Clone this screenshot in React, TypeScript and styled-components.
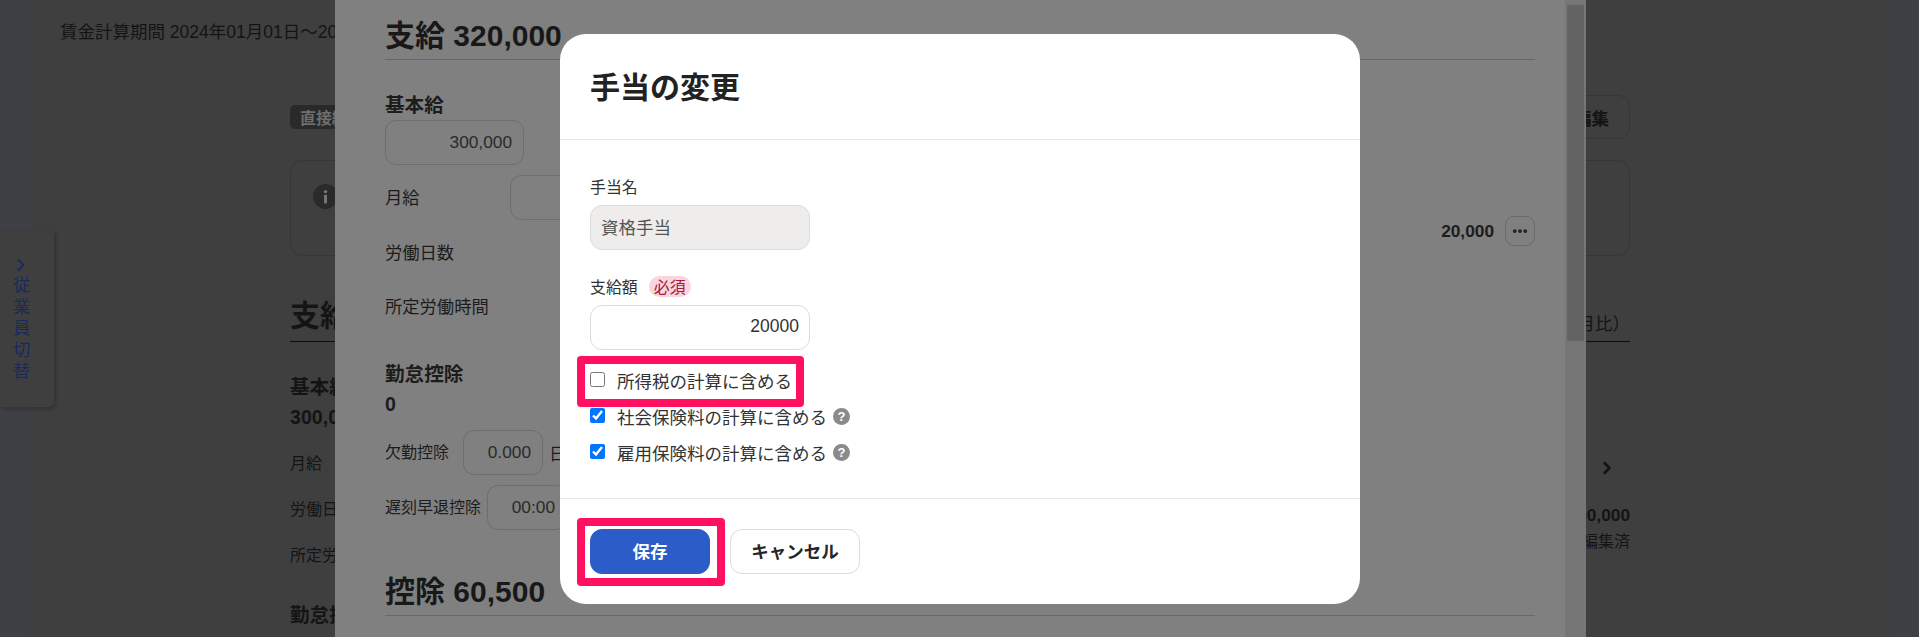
import React from "react";
import styled, { createGlobalStyle } from "styled-components";
import { ChevronRight, MoreHorizontal } from "lucide-react";

const font = `"Liberation Sans", "Noto Sans CJK JP", sans-serif`;

const GlobalStyle = createGlobalStyle`
  html, body {
    margin: 0;
    padding: 0;
    font-family: ${font};
    overflow: hidden;
  }
  * {
    box-sizing: border-box;
  }
`;

/* page behind the two overlays */
const Page = styled.div`
  display: flex;
  width: 100%;
  height: 100vh;
  overflow: hidden;
  background: #3e4045;
  color: #141414;
  font-size: 17.5px;
`;

const Main = styled.main`
  flex: 1;
  min-width: 0;
  margin: 0 30px;
  padding: 20px 0 0 30px;
  background: #3f3f3f;
`;

const Period = styled.div`
  line-height: 24px;
  white-space: nowrap;
`;

const Content = styled.div`
  width: 1340px;
  margin: 51px 0 0 230px;
`;

const TopRow = styled.div`
  display: flex;
  align-items: center;
  justify-content: space-between;
  height: 44px;
`;

const Badge = styled.span`
  display: inline-flex;
  align-items: center;
  height: 24px;
  padding: 0 10px;
  border-radius: 5px;
  background: #2a2a2a;
  color: #6e6e6e;
  font-size: 15.9px;
  font-weight: 700;
`;

const EditButton = styled.div`
  display: flex;
  align-items: center;
  height: 44px;
  padding: 0 20px;
  border: 1px solid #363636;
  border-radius: 11px;
  font-weight: 700;
`;

const InfoCard = styled.div`
  height: 96px;
  margin-top: 21px;
  padding: 23px 22px;
  border: 1px solid #363636;
  border-radius: 12px;
`;

const InfoIcon = () => (
  <svg width="25" height="25" viewBox="0 0 25 25">
    <circle cx="12.5" cy="12.5" r="12.5" fill="#2a2a2a" />
    <circle cx="12.5" cy="7.6" r="1.7" fill="#777" />
    <rect x="11" y="10.8" width="3" height="8.6" rx="0.6" fill="#777" />
  </svg>
);

const PageHeading = styled.div`
  display: flex;
  align-items: flex-end;
  justify-content: space-between;
  height: 50px;
  margin-top: 36px;
  padding-bottom: 6px;
  border-bottom: 1.5px solid #0d0d0d;
`;

const HeadingTitle = styled.h2`
  margin: 0;
  font-size: 30px;
  font-weight: 700;
`;

const Columns = styled.div`
  display: flex;
  justify-content: space-between;
`;

const PageLeft = styled.div`
  display: flex;
  flex-direction: column;
  padding-top: 32px;
`;

const PageText = styled.div<{ $bold?: boolean; $gap: number; $size?: number }>`
  margin-top: ${(p) => p.$gap}px;
  line-height: 26px;
  font-size: ${(p) => p.$size ?? 16}px;
  font-weight: ${(p) => (p.$bold ? 700 : 400)};
`;

const PageRight = styled.div`
  display: flex;
  flex-direction: column;
  align-items: flex-end;
  padding-top: 116px;
`;

const Pager = styled.div`
  display: flex;
  align-items: center;
  gap: 12px;
  height: 20px;
  margin-right: 13px;
  color: #1a2f66;
`;

const PagerChevron = styled.span`
  display: flex;
  color: #141414;
`;

/* left switcher tab */
const SideTab = styled.aside`
  position: fixed;
  top: 231px;
  left: 0;
  display: flex;
  flex-direction: column;
  align-items: center;
  width: 54px;
  height: 176px;
  padding: 24px 12px 0 0;
  background: #3f3f3f;
  border-radius: 0 0 6px 0;
  box-shadow: 2px 2px 4px rgba(0, 0, 0, 0.22);
  color: #182a5e;
`;

const SideTabLabel = styled.span`
  margin-top: 1px;
  writing-mode: vertical-rl;
  font-size: 17.3px;
  letter-spacing: 4.2px;
`;

/* drawer */
const Drawer = styled.section`
  position: fixed;
  top: 0;
  left: 335px;
  display: flex;
  width: 1251px;
  height: 100vh;
  overflow: hidden;
  background: #808080;
  color: #1c1c1c;
  font-size: 17.3px;
`;

const DrawerBody = styled.div`
  flex: 1;
  min-width: 0;
  padding: 14px 30px 0 50px;
`;

const Scrollbar = styled.div`
  flex: 0 0 21px;
  padding: 5px 2px 0;
  background: #767676;
`;

const ScrollThumb = styled.div`
  height: 336px;
  background: #636363;
`;

const SectionHeading = styled.h2`
  height: 46px;
  margin: 0;
  border-bottom: 1.5px solid #696969;
  font-size: 30px;
  line-height: 44px;
  font-weight: 700;
  color: #181818;
`;

const DrawerColumns = styled.div`
  display: flex;
  justify-content: space-between;
  height: 510px;
`;

const FieldColumn = styled.div`
  display: flex;
  flex-direction: column;
  padding-top: 32px;
`;

const FieldTitle = styled.div<{ $top?: number }>`
  margin-top: ${(p) => p.$top ?? 0}px;
  line-height: 26px;
  font-size: 19.6px;
  font-weight: 700;
`;

const FieldRow = styled.div<{ $top?: number }>`
  display: flex;
  align-items: center;
  gap: 6px;
  min-height: 45px;
  margin-top: ${(p) => p.$top ?? 10}px;
`;

const FieldName = styled.span<{ $width?: number; $small?: boolean }>`
  flex: none;
  width: ${(p) => (p.$width ? `${p.$width}px` : "auto")};
  padding-bottom: 3px;
  font-size: ${(p) => (p.$small ? 16 : 17.3)}px;
  white-space: nowrap;
`;

const GhostInput = styled.div<{ $width: number }>`
  display: flex;
  align-items: center;
  justify-content: flex-end;
  width: ${(p) => p.$width}px;
  height: 45px;
  padding-right: 11px;
  border: 1px solid #6e6e6e;
  border-radius: 11px;
  color: #2a2a2a;
`;

const AmountColumn = styled.div`
  display: flex;
  align-items: center;
  gap: 11px;
  height: 30px;
  margin-top: 156px;
  font-weight: 700;
`;

const MoreButton = styled.span`
  display: flex;
  align-items: center;
  justify-content: center;
  width: 30px;
  height: 30px;
  border: 1px solid #6a6a6a;
  border-radius: 9px;
  color: #1c1c1c;
`;

/* modal */
const Modal = styled.div`
  position: fixed;
  top: 34px;
  left: 560px;
  display: flex;
  flex-direction: column;
  width: 800px;
  height: 570px;
  background: #fff;
  border-radius: 26px;
  color: #262626;
  font-size: 17.5px;
`;

const ModalHeader = styled.header`
  display: flex;
  align-items: center;
  flex: 0 0 106px;
  padding: 0 30px 4px;
  border-bottom: 1px solid #e6e6e6;
`;

const ModalTitle = styled.h1`
  margin: 0;
  font-size: 30px;
  font-weight: 700;
  color: #222;
`;

const ModalBody = styled.div`
  flex: 1;
  padding: 35px 30px 0;
`;

const Label = styled.label<{ $top?: number }>`
  display: flex;
  align-items: center;
  gap: 11px;
  height: 22px;
  margin: ${(p) => p.$top ?? 0}px 0 8px;
  font-size: 15.9px;
  color: #333;
`;

const RequiredPill = styled.span`
  display: inline-flex;
  align-items: center;
  justify-content: center;
  width: 42px;
  height: 21px;
  border-radius: 11px;
  background: #f9d5dc;
  color: #a8173c;
  font-size: 15.9px;
`;

const TextInput = styled.input<{ $right?: boolean }>`
  display: block;
  width: 220px;
  height: 45px;
  padding: 0 10px 3px;
  border: 1px solid #dcdcdc;
  border-radius: 12px;
  outline: none;
  background: #fff;
  font-family: ${font};
  font-size: 17.5px;
  color: #333;
  text-align: ${(p) => (p.$right ? "right" : "left")};

  &:disabled {
    background: #eeedec;
    color: #555;
    -webkit-text-fill-color: #555;
    opacity: 1;
  }
`;

const CheckList = styled.div`
  margin-top: 14px;
`;

const CheckRow = styled.label`
  position: relative;
  display: flex;
  align-items: center;
  height: 36px;
  padding-bottom: 3px;
  color: #333;
`;

const Checkbox = styled.input`
  flex: 0 0 15px;
  width: 15px;
  height: 15px;
  margin: 0 12px 2px 0;
`;

const HelpIcon = styled.span`
  display: inline-flex;
  align-items: center;
  justify-content: center;
  width: 17px;
  height: 17px;
  margin-left: 6px;
  border-radius: 50%;
  background: #8a8a8a;
  color: #fff;
  font-size: 13px;
  font-weight: 700;
`;

const Highlight = styled.span<{
  $left: number;
  $top: number;
  $width: number;
  $height: number;
}>`
  position: absolute;
  left: ${(p) => p.$left}px;
  top: ${(p) => p.$top}px;
  width: ${(p) => p.$width}px;
  height: ${(p) => p.$height}px;
  border: 8px solid #ff1160;
  border-radius: 4px;
  pointer-events: none;
`;

const ModalFooter = styled.footer`
  display: flex;
  gap: 20px;
  flex: 0 0 106px;
  padding: 30px 30px 0;
  border-top: 1px solid #e6e6e6;
`;

const Button = styled.button<{ $primary?: boolean; $width: number }>`
  position: relative;
  width: ${(p) => p.$width}px;
  height: 45px;
  padding: 0 0 2px;
  border: 1px solid ${(p) => (p.$primary ? "#2b5cc8" : "#dcdcdc")};
  border-radius: 12px;
  background: ${(p) => (p.$primary ? "#2b5cc8" : "#fff")};
  color: ${(p) => (p.$primary ? "#fff" : "#262626")};
  font-family: ${font};
  font-size: 17.5px;
  font-weight: 700;
`;

const checks = [
  { name: "所得税の計算に含める", checked: false, help: false },
  { name: "社会保険料の計算に含める", checked: true, help: true },
  { name: "雇用保険料の計算に含める", checked: true, help: true },
];

export default function App() {
  return (
    <>
      <GlobalStyle />
      <Page>
        <Main>
          <Period>賃金計算期間 2024年01月01日～2024年01月31日</Period>
          <Content>
            <TopRow>
              <Badge>直接編集</Badge>
              <EditButton>一括編集</EditButton>
            </TopRow>
            <InfoCard>
              <InfoIcon />
            </InfoCard>
            <PageHeading>
              <HeadingTitle>支給 320,000</HeadingTitle>
              <span>（前月比）</span>
            </PageHeading>
            <Columns>
              <PageLeft>
                <PageText $bold $gap={0} $size={19.6}>基本給</PageText>
                <PageText $bold $gap={4} $size={19.6}>300,000</PageText>
                <PageText $gap={21}>月給</PageText>
                <PageText $gap={20}>労働日数</PageText>
                <PageText $gap={20}>所定労働時間</PageText>
                <PageText $bold $gap={33} $size={19.6}>勤怠控除</PageText>
              </PageLeft>
              <PageRight>
                <Pager>
                  <span>前月</span>
                  <PagerChevron>
                    <ChevronRight size={20} strokeWidth={3} />
                  </PagerChevron>
                </Pager>
                <PageText $bold $gap={24} $size={17.3}>300,000</PageText>
                <PageText $gap={1}>編集済</PageText>
              </PageRight>
            </Columns>
          </Content>
        </Main>
      </Page>

      <SideTab>
        <ChevronRight size={20} strokeWidth={2.5} />
        <SideTabLabel>従業員切替</SideTabLabel>
      </SideTab>

      <Drawer>
        <DrawerBody>
          <SectionHeading>支給 320,000</SectionHeading>
          <DrawerColumns>
            <FieldColumn>
              <FieldTitle>基本給</FieldTitle>
              <FieldRow $top={2}>
                <GhostInput $width={139}>300,000</GhostInput>
              </FieldRow>
              <FieldRow>
                <FieldName $width={119}>月給</FieldName>
                <GhostInput $width={140} />
              </FieldRow>
              <FieldRow>
                <FieldName>労働日数</FieldName>
              </FieldRow>
              <FieldRow $top={9}>
                <FieldName>所定労働時間</FieldName>
              </FieldRow>
              <FieldTitle $top={32}>勤怠控除</FieldTitle>
              <FieldTitle $top={4}>0</FieldTitle>
              <FieldRow $top={13}>
                <FieldName $width={72} $small>欠勤控除</FieldName>
                <GhostInput $width={80}>0.000</GhostInput>
                <span>日</span>
              </FieldRow>
              <FieldRow>
                <FieldName $width={96} $small>遅刻早退控除</FieldName>
                <GhostInput $width={80}>00:00</GhostInput>
              </FieldRow>
            </FieldColumn>
            <AmountColumn>
              <span>20,000</span>
              <MoreButton>
                <MoreHorizontal size={18} strokeWidth={3} />
              </MoreButton>
            </AmountColumn>
          </DrawerColumns>
          <SectionHeading>控除 60,500</SectionHeading>
        </DrawerBody>
        <Scrollbar>
          <ScrollThumb />
        </Scrollbar>
      </Drawer>

      <Modal>
        <ModalHeader>
          <ModalTitle>手当の変更</ModalTitle>
        </ModalHeader>
        <ModalBody>
          <Label>手当名</Label>
          <TextInput disabled defaultValue="資格手当" />
          <Label $top={25}>
            支給額
            <RequiredPill>必須</RequiredPill>
          </Label>
          <TextInput $right defaultValue="20000" />
          <CheckList>
            {checks.map((check, idx) => (
              <CheckRow key={check.name}>
                <Checkbox type="checkbox" defaultChecked={check.checked} />
                {check.name}
                {check.help && <HelpIcon>?</HelpIcon>}
                {idx === 0 && (
                  <Highlight $left={-13} $top={-8} $width={227} $height={51} />
                )}
              </CheckRow>
            ))}
          </CheckList>
        </ModalBody>
        <ModalFooter>
          <Button $primary $width={120}>
            保存
            <Highlight $left={-14} $top={-12} $width={148} $height={68} />
          </Button>
          <Button $width={130}>キャンセル</Button>
        </ModalFooter>
      </Modal>
    </>
  );
}
